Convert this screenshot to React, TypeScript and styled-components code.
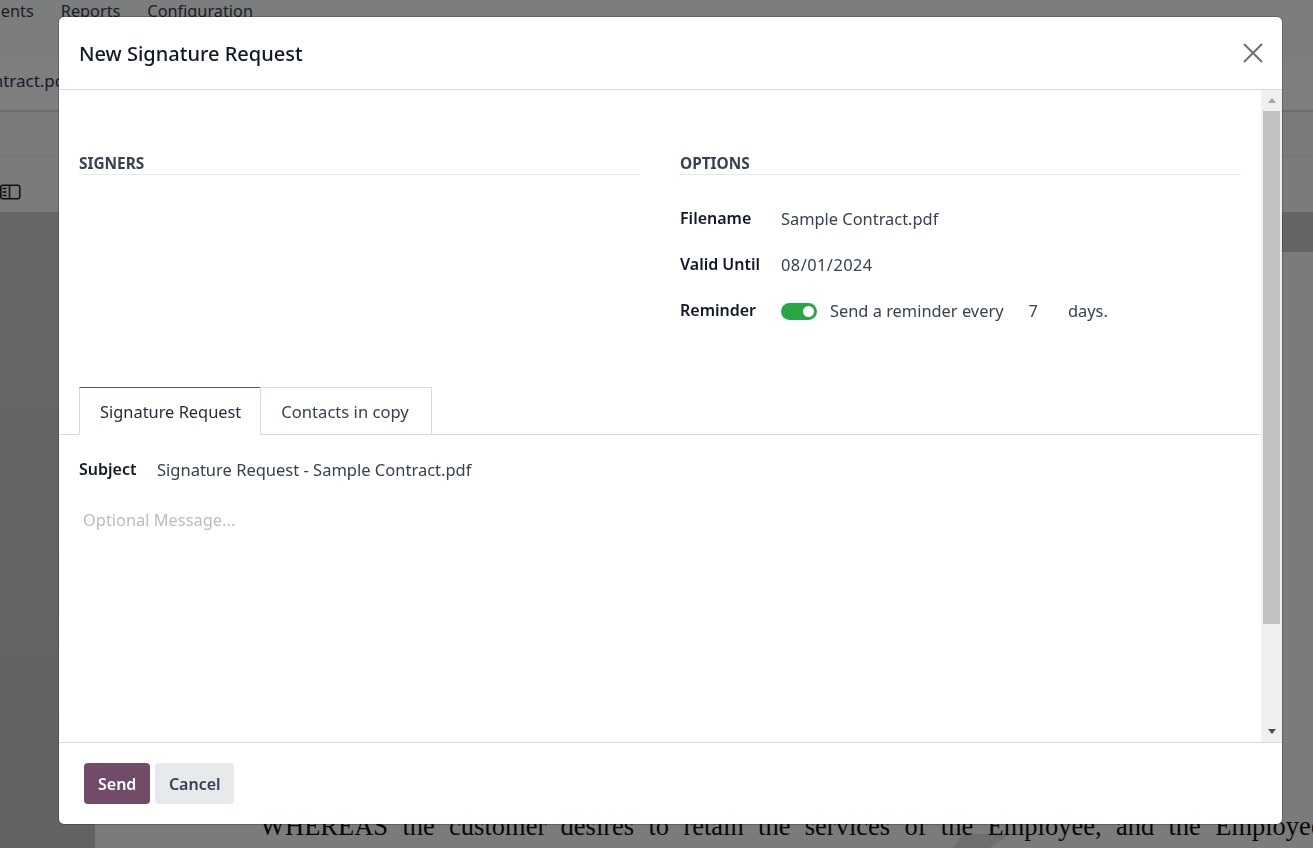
import styled, { createGlobalStyle } from "styled-components";

const GlobalStyle = createGlobalStyle`
  html, body {
    margin: 0;
    height: 100%;
    overflow: hidden;
    background: #fff;
    font-family: "Noto Sans", "Liberation Sans", sans-serif;
    color: #374151;
  }
  * { box-sizing: border-box; }
`;

const Page = styled.div`
  width: 1313px;
  height: 848px;
  display: flex;
  flex-direction: column;
  overflow: hidden;
  background: #f9fafb;
`;

const NavBar = styled.nav`
  height: 58px;
  display: flex;
  gap: 27px;
  margin-left: -54px;
  font-size: 16.3px;
  line-height: 22px;
  color: #374151;
  overflow: hidden;
`;

const NavItem = styled.span``;

const BreadcrumbBar = styled.div`
  height: 54px;
  border-bottom: 2px solid #d8dadd;
  padding-top: 10px;
  font-size: 17px;
  line-height: 26px;
  color: #1f3a5f;
  background: #fdfdfd;
  overflow: hidden;
  white-space: nowrap;
  & > span { margin-left: -92px; }
`;

const StatusBar = styled.div`
  height: 45px;
  border-bottom: 1px solid #e2e3e5;
  background: #f4f5f5;
`;

const ToolBar = styled.div`
  height: 56px;
  background: #f6f6f6;
  border-bottom: 1px solid #d0d0d0;
  display: flex;
  align-items: flex-end;
  padding: 0 0 12px 0;
`;

const ViewerRow = styled.div`
  flex: 1;
  display: flex;
  min-height: 0;
`;

const Thumbs = styled.div`
  width: 95px;
  background: linear-gradient(180deg, #cfcfcf, #c4c4c4);
`;

const Sheet = styled.div`
  flex: 1;
  display: flex;
  flex-direction: column;
  min-width: 0;
  overflow: hidden;
`;

const SheetBand = styled.div`
  height: 39px;
  flex: none;
  background: #c9c9c9;
`;

const DocArea = styled.div`
  flex: 1;
  background: #f6f6f6;
  position: relative;
  padding: 559px 0 0 165px;
  overflow: hidden;
`;

const DocLine = styled.div`
  position: relative;
  width: 1100px;
  font-family: "Liberation Serif", serif;
  font-size: 26.5px;
  line-height: 30px;
  color: #111;
  white-space: nowrap;
  word-spacing: 7.7px;
`;

const Watermark = styled.svg`
  position: absolute;
  left: 852px;
  top: 582px;
`;

const Backdrop = styled.div`
  position: fixed;
  inset: 0;
  background: rgba(0, 0, 0, 0.5);
  display: flex;
  padding: 17px 0 0 59px;
`;

const Modal = styled.div`
  width: 1223px;
  height: 807px;
  background: #fff;
  border-radius: 5px;
  display: flex;
  flex-direction: column;
  overflow: hidden;
  box-shadow: 0 0 0 1px rgba(0, 0, 0, 0.2);
`;

const ModalHeader = styled.header`
  height: 73px;
  flex: none;
  border-bottom: 1px solid #d8dadd;
  display: flex;
  align-items: center;
  justify-content: space-between;
  padding: 0 19px 0 20px;
`;

const Title = styled.h4`
  margin: 2px 0 0;
  font-size: 20px;
  font-weight: 500;
  line-height: 30px;
  color: #111827;
`;

const CloseButton = styled.button`
  width: 20px;
  height: 20px;
  padding: 0;
  border: 0;
  background: none;
  color: #6f6f6f;
  display: flex;
`;

const ModalMiddle = styled.div`
  flex: 1;
  min-height: 0;
  display: flex;
`;

const ModalBody = styled.div`
  flex: 1;
  min-width: 0;
`;

const Columns = styled.div`
  display: grid;
  grid-template-columns: 561px 561px;
  column-gap: 40px;
  padding: 62px 20px 0;
  height: 297px;
`;

const SectionTitle = styled.div`
  font-size: 15.4px;
  line-height: 24px;
  font-weight: 700;
  text-transform: uppercase;
  color: #374151;
  border-bottom: 1px solid #e7e9ed;
  height: 23px;
  margin-bottom: 31px;
`;

const FieldRow = styled.div`
  display: flex;
  align-items: center;
  height: 24px;
  margin-bottom: 22px;
`;

const FieldLabel = styled.label<{ $width: number }>`
  width: ${({ $width }) => $width}px;
  flex: none;
  font-size: 16px;
  font-weight: 600;
  color: #111827;
`;

const FieldValue = styled.span`
  font-size: 16.4px;
  color: #374151;
  margin-top: 1px;
  white-space: nowrap;
`;

const SubjectValue = styled(FieldValue)`
  font-size: 16.5px;
  margin-top: 0;
`;

const DateValue = styled(FieldValue)`
  letter-spacing: 0.45px;
`;

const Toggle = styled.span`
  width: 36px;
  height: 17px;
  margin: 2px 13px 0 0;
  border-radius: 9px;
  background: #28a745;
  display: flex;
  align-items: center;
  justify-content: flex-end;
  padding-right: 3px;
  &::after {
    content: "";
    width: 11px;
    height: 11px;
    border-radius: 50%;
    background: #fff;
  }
`;

const DaysCount = styled.span`
  margin: 0 30px 0 25px;
`;

const Tabs = styled.div`
  display: flex;
  height: 48px;
  padding-left: 20px;
  border-bottom: 1px solid #d8dadd;
`;

const Tab = styled.div<{ $active?: boolean }>`
  height: 48px;
  padding: 0 ${({ $active }) => ($active ? 19 : 22)}px 0 20px;
  display: flex;
  align-items: center;
  font-size: ${({ $active }) => ($active ? 16.4 : 16.6)}px;
  background: #fff;
  color: ${({ $active }) => ($active ? "#1f2937" : "#374151")};
  border: 1px solid #d8dadd;
  border-top-color: ${({ $active }) => ($active ? "#714b67" : "#d8dadd")};
  border-bottom-color: ${({ $active }) => ($active ? "#fff" : "#d8dadd")};
  margin-left: ${({ $active }) => ($active ? 0 : -1)}px;
`;

const SubjectRow = styled.div`
  display: flex;
  align-items: center;
  height: 24px;
  margin: 22px 20px 0;
`;

const Placeholder = styled.div`
  margin: 27px 24px 0;
  font-size: 16.4px;
  line-height: 24px;
  color: #b9bcc2;
`;

const ScrollTrack = styled.div`
  width: 21px;
  flex: none;
  background: #f0f0f0;
  display: flex;
  flex-direction: column;
  align-items: center;
`;

const ScrollArrow = styled.div<{ $down?: boolean }>`
  height: 21px;
  flex: none;
  display: flex;
  align-items: center;
  justify-content: center;
  &::before {
    content: "";
    border-left: 4.5px solid transparent;
    border-right: 4.5px solid transparent;
    ${({ $down }) =>
      $down ? "border-top: 5px solid #505050;" : "border-bottom: 5px solid #a3a3a3;"}
  }
`;

const ScrollThumb = styled.div`
  width: 17px;
  height: 513px;
  flex: none;
  background: #c1c1c1;
`;

const ScrollGap = styled.div`
  flex: 1;
`;

const ModalFooter = styled.footer`
  height: 82px;
  flex: none;
  border-top: 1px solid #d8dadd;
  display: flex;
  align-items: flex-start;
  gap: 5px;
  padding: 20px 25px 0;
`;

const Button = styled.button<{ $primary?: boolean }>`
  height: 41px;
  padding: 0 ${({ $primary }) => ($primary ? 14 : 13.5)}px;
  border: 0;
  border-radius: 4px;
  font-family: inherit;
  font-size: 16px;
  font-weight: 600;
  color: ${({ $primary }) => ($primary ? "#fff" : "#374151")};
  background: ${({ $primary }) => ($primary ? "#714b67" : "#e7e9ed")};
`;

export default function App() {
  return (
    <>
      <GlobalStyle />
      <Page>
        <NavBar>
          <NavItem>Documents</NavItem>
          <NavItem>Reports</NavItem>
          <NavItem>Configuration</NavItem>
        </NavBar>
        <BreadcrumbBar>
          <span>Sample Contract.pdf</span>
        </BreadcrumbBar>
        <StatusBar />
        <ToolBar>
          <svg width="21" height="16" viewBox="0 0 21 16" fill="none" stroke="#222">
            <rect x="0.75" y="1.25" width="19" height="13.5" rx="2" strokeWidth="1.5" />
            <path d="M9.5 1.5v13" strokeWidth="1.5" />
            <path d="M2.5 4.5h4M2.5 8h4M2.5 11.5h4" strokeWidth="1.3" />
          </svg>
        </ToolBar>
        <ViewerRow>
          <Thumbs />
          <Sheet>
            <SheetBand />
            <DocArea>
              <Watermark width="70" height="15" viewBox="0 0 70 15">
                <path d="M5 15 L16 0 H63 L41 15 Z" fill="#dcdcdc" />
              </Watermark>
              <DocLine>WHEREAS the customer desires to retain the services of the Employee, and the Employee</DocLine>
            </DocArea>
          </Sheet>
        </ViewerRow>
      </Page>
      <Backdrop>
        <Modal>
          <ModalHeader>
            <Title>New Signature Request</Title>
            <CloseButton aria-label="Close">
              <svg width="20" height="20" viewBox="0 0 20 20" fill="none" stroke="currentColor" strokeWidth="2">
                <path d="M1 1l18 18M19 1L1 19" />
              </svg>
            </CloseButton>
          </ModalHeader>
          <ModalMiddle>
            <ModalBody>
              <Columns>
                <div>
                  <SectionTitle>Signers</SectionTitle>
                </div>
                <div>
                  <SectionTitle>Options</SectionTitle>
                  <FieldRow>
                    <FieldLabel $width={101}>Filename</FieldLabel>
                    <FieldValue>Sample Contract.pdf</FieldValue>
                  </FieldRow>
                  <FieldRow>
                    <FieldLabel $width={101}>Valid Until</FieldLabel>
                    <DateValue>08/01/2024</DateValue>
                  </FieldRow>
                  <FieldRow>
                    <FieldLabel $width={101}>Reminder</FieldLabel>
                    <Toggle />
                    <FieldValue>
                      Send a reminder every
                      <DaysCount>7</DaysCount>
                      days.
                    </FieldValue>
                  </FieldRow>
                </div>
              </Columns>
              <Tabs>
                <Tab $active>Signature Request</Tab>
                <Tab>Contacts in copy</Tab>
              </Tabs>
              <SubjectRow>
                <FieldLabel $width={78}>Subject</FieldLabel>
                <SubjectValue>Signature Request - Sample Contract.pdf</SubjectValue>
              </SubjectRow>
              <Placeholder>Optional Message...</Placeholder>
            </ModalBody>
            <ScrollTrack>
              <ScrollArrow />
              <ScrollThumb />
              <ScrollGap />
              <ScrollArrow $down />
            </ScrollTrack>
          </ModalMiddle>
          <ModalFooter>
            <Button $primary>Send</Button>
            <Button>Cancel</Button>
          </ModalFooter>
        </Modal>
      </Backdrop>
    </>
  );
}
